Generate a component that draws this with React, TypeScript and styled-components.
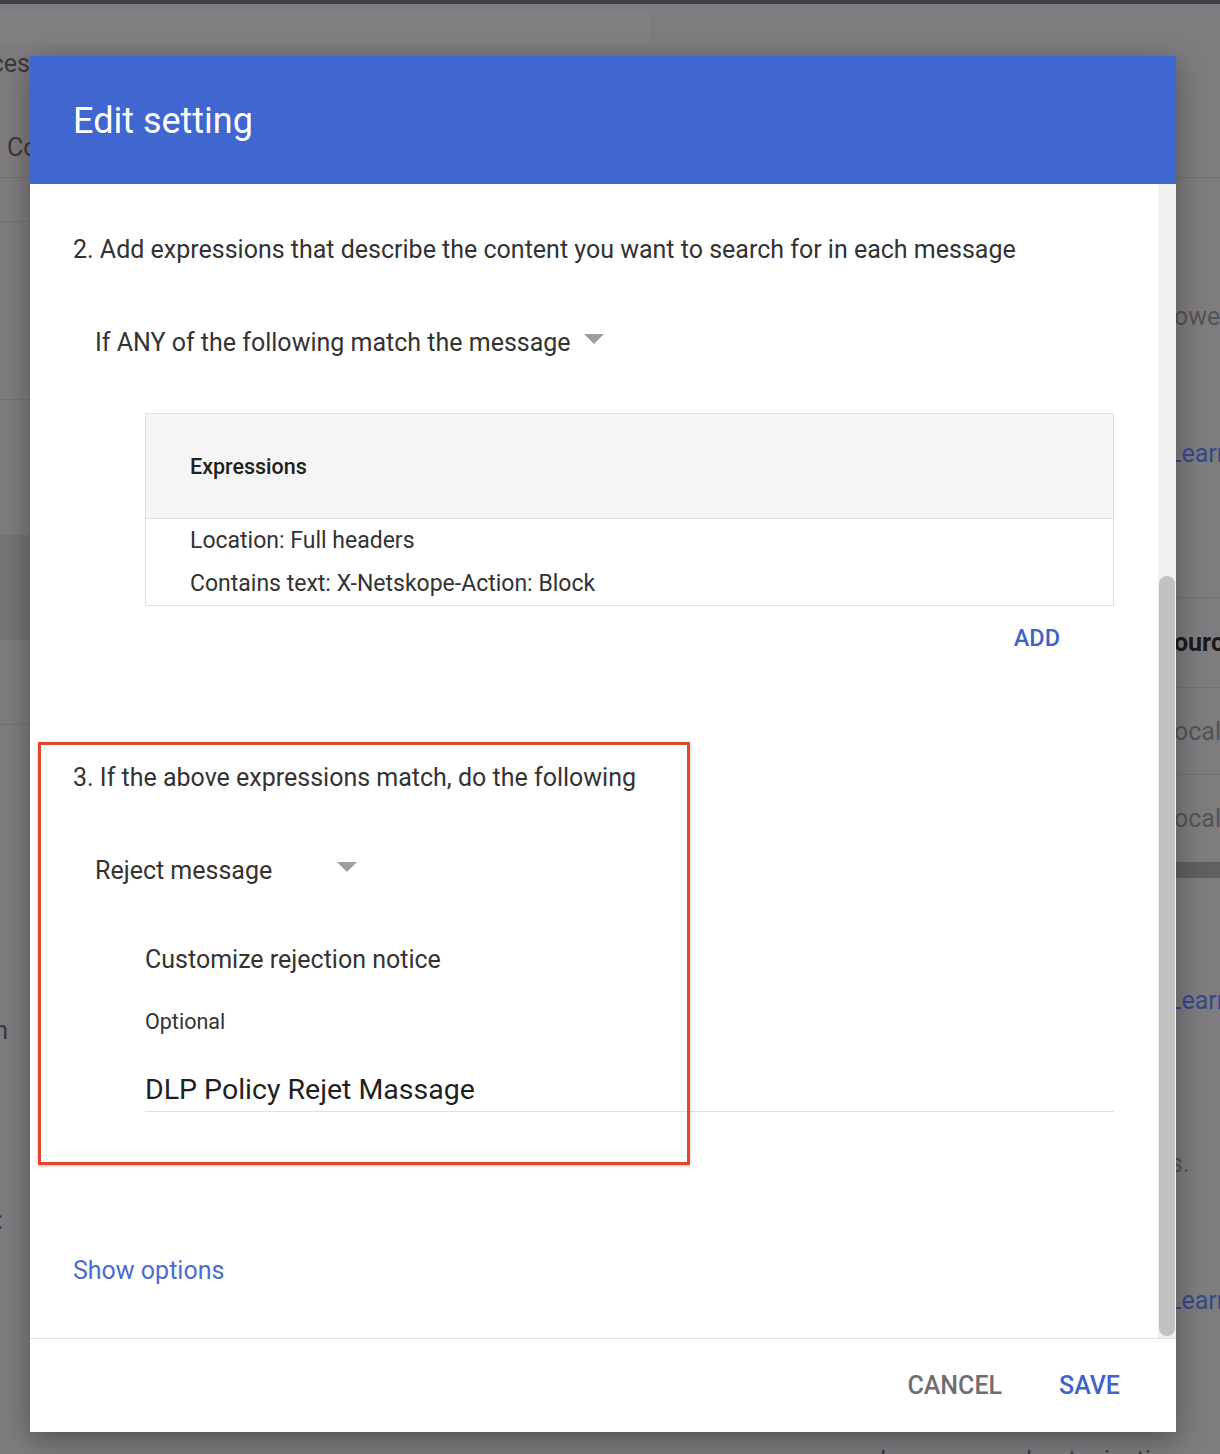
import styled, { createGlobalStyle } from "styled-components";

const GlobalStyle = createGlobalStyle`
  html, body {
    margin: 0;
    padding: 0;
  }
  body {
    font-family: Roboto, "Noto Sans", "Liberation Sans", sans-serif;
  }
`;

const Page = styled.div`
  position: relative;
  width: 1220px;
  height: 1454px;
  overflow: hidden;
  background: #7e7c7f;
`;

const TopBar = styled.div`
  height: 4px;
  background: #413f43;
`;

const SearchBand = styled.div`
  height: 46px;
  display: flex;
  padding: 6px 0;
  box-sizing: border-box;
`;

const SearchBox = styled.div`
  width: 650px;
  background: #817f82;
`;

const Backdrop = styled.div`
  display: grid;
  grid-template-columns: 30px 1fr 44px;
`;

const Strip = styled.div`
  display: flex;
  flex-direction: column;
  overflow: hidden;
`;

const BgRow = styled.div<{ $h: number; $line?: boolean; $shade?: string; $end?: boolean; $inset?: number }>`
  flex: none;
  height: ${(p) => p.$h}px;
  box-sizing: border-box;
  display: flex;
  align-items: center;
  justify-content: ${(p) => (p.$end ? "flex-end" : "flex-start")};
  padding: ${(p) => (p.$end ? `0 ${p.$inset ?? 0}px 0 0` : `0 0 0 ${p.$inset ?? 0}px`)};
  border-bottom: ${(p) => (p.$line ? "1px solid #737174" : "none")};
  background: ${(p) => p.$shade ?? "transparent"};
  white-space: nowrap;
  overflow: hidden;
`;

const toneColors = {
  text: "#3b393c",
  muted: "#555356",
  link: "#35498a",
  strong: "#1b1a1c",
};

const BgText = styled.span<{ $tone?: keyof typeof toneColors; $shift?: number }>`
  font-size: 25px;
  font-weight: ${(p) => (p.$tone === "strong" ? 700 : 400)};
  color: ${(p) => toneColors[p.$tone ?? "text"]};
  margin-left: ${(p) => p.$shift ?? 0}px;
`;

const Dialog = styled.div`
  position: absolute;
  left: 30px;
  top: 56px;
  width: 1146px;
  height: 1376px;
  display: flex;
  flex-direction: column;
  background: #ffffff;
  box-shadow: 0 8px 28px rgba(0, 0, 0, 0.35);
  overflow: hidden;
`;

const Header = styled.header`
  flex: none;
  height: 128px;
  background: #4066d0;
  display: flex;
  align-items: center;
  padding-left: 43px;
`;

const Title = styled.h1`
  margin: 2px 0 0;
  font-size: 36px;
  font-weight: 400;
  color: #ffffff;
`;

const Body = styled.div`
  flex: 1;
  min-height: 0;
  display: flex;
`;

const Content = styled.div`
  flex: 1;
  display: flex;
  flex-direction: column;
  padding: 0 44px 0 43px;
`;

const ScrollTrack = styled.div`
  flex: none;
  width: 18px;
  padding: 0 1px 2px;
  box-sizing: border-box;
  background: #f1f1f1;
  display: flex;
  flex-direction: column;
  justify-content: flex-end;
`;

const ScrollThumb = styled.div`
  height: 760px;
  border-radius: 8px;
  background: #c1c1c1;
`;

const StepTitle = styled.p<{ $top: number }>`
  margin: ${(p) => p.$top}px 0 0;
  font-size: 25px;
  line-height: 32px;
  color: #333333;
`;

const Select = styled.div<{ $top: number }>`
  display: flex;
  align-items: center;
  margin: ${(p) => p.$top}px 0 0 22px;
`;

const SelectLabel = styled.span<{ $minWidth?: number }>`
  min-width: ${(p) => p.$minWidth ?? 0}px;
  font-size: 25px;
  line-height: 32px;
  color: #333333;
`;

const Caret = styled.span`
  width: 0;
  height: 0;
  margin: -8px 0 0 13px;
  border-left: 10px solid transparent;
  border-right: 10px solid transparent;
  border-top: 10px solid #9e9e9e;
`;

const ExprTable = styled.div`
  margin: 54px 0 0 72px;
  border: 1px solid #e0e0e0;
`;

const ExprHead = styled.div`
  height: 104px;
  display: flex;
  align-items: center;
  padding-left: 44px;
  background: #f5f5f5;
  border-bottom: 1px solid #e0e0e0;
  font-size: 21.5px;
  font-weight: 500;
  color: #212121;
`;

const ExprRow = styled.div`
  height: 43px;
  line-height: 43px;
  padding-left: 44px;
  font-size: 23px;
  color: #333333;
`;

const AddRow = styled.div`
  display: flex;
  justify-content: flex-end;
  margin-top: 16px;
  padding-right: 54px;
`;

const FlatButton = styled.button<{ $tone?: "primary" | "plain"; $size?: number }>`
  border: 0;
  padding: 0;
  background: none;
  font-family: inherit;
  font-size: ${(p) => p.$size ?? 23.5}px;
  line-height: 32px;
  font-weight: 500;
  text-transform: uppercase;
  color: ${(p) => (p.$tone === "plain" ? "#6e6e6e" : "#3f63cc")};
  cursor: pointer;
`;

const SubLabel = styled.p<{ $top: number; $small?: boolean }>`
  margin: ${(p) => p.$top}px 0 0 72px;
  font-size: ${(p) => (p.$small ? 21.5 : 25)}px;
  line-height: ${(p) => (p.$small ? 28 : 32)}px;
  color: #333333;
`;

const Field = styled.input`
  margin: 36px 0 0 72px;
  padding: 0 0 4px;
  height: 40px;
  box-sizing: border-box;
  border: 0;
  border-bottom: 1px solid #e0e0e0;
  outline: none;
  background: none;
  font-family: inherit;
  font-size: 28.5px;
  line-height: 36px;
  color: #1f1f1f;
`;

const ShowOptions = styled.a`
  align-self: flex-start;
  margin-top: 143px;
  font-size: 25px;
  line-height: 32px;
  color: #4a6bd0;
  text-decoration: none;
  cursor: pointer;
`;

const Footer = styled.footer`
  flex: none;
  height: 94px;
  box-sizing: border-box;
  border-top: 1px solid #e0e0e0;
  display: flex;
  align-items: center;
  justify-content: flex-end;
  gap: 57px;
  padding-right: 56px;
`;

const Highlight = styled.div`
  position: absolute;
  left: 38px;
  top: 742px;
  width: 652px;
  height: 423px;
  box-sizing: border-box;
  border: 3px solid #e2452f;
  box-shadow: 0 1px 3px rgba(0, 0, 0, 0.25);
  pointer-events: none;
`;

export default function App() {
  return (
    <Page>
      <GlobalStyle />
      <TopBar />
      <SearchBand>
        <SearchBox />
      </SearchBand>
      <Backdrop>
        <Strip>
          <BgRow $h={26} $end>
            <BgText>Services</BgText>
          </BgRow>
          <BgRow $h={42} />
          <BgRow $h={60} $line $inset={7}>
            <BgText>Content</BgText>
          </BgRow>
          <BgRow $h={44} $line />
          <BgRow $h={178} $line />
          <BgRow $h={135} />
          <BgRow $h={105} $line $shade="#767477" />
          <BgRow $h={85} $line />
          <BgRow $h={285} />
          <BgRow $h={40} $end $inset={22}>
            <BgText>Attach</BgText>
          </BgRow>
          <BgRow $h={150} />
          <BgRow $h={40} $end $inset={27}>
            <BgText>Name:</BgText>
          </BgRow>
        </Strip>
        <Strip>
          <BgRow $h={1390} />
          <BgRow $h={40} $inset={850}>
            <BgText>Learn more about rejection notices and options</BgText>
          </BgRow>
        </Strip>
        <Strip>
          <BgRow $h={128} $line />
          <BgRow $h={118} />
          <BgRow $h={40}>
            <BgText $tone="muted" $shift={-2}>owed</BgText>
          </BgRow>
          <BgRow $h={97} />
          <BgRow $h={40}>
            <BgText $tone="link" $shift={-8}>Learn</BgText>
          </BgRow>
          <BgRow $h={125} $line />
          <BgRow $h={90} $line>
            <BgText $tone="strong" $shift={-2}>ource</BgText>
          </BgRow>
          <BgRow $h={87} $line>
            <BgText $tone="muted" $shift={-2}>ocal</BgText>
          </BgRow>
          <BgRow $h={87}>
            <BgText $tone="muted" $shift={-2}>ocal</BgText>
          </BgRow>
          <BgRow $h={16} $shade="#625f63" />
          <BgRow $h={102} />
          <BgRow $h={40}>
            <BgText $tone="link" $shift={-8}>Learn</BgText>
          </BgRow>
          <BgRow $h={123} />
          <BgRow $h={40}>
            <BgText $tone="muted" $shift={-6}>s.</BgText>
          </BgRow>
          <BgRow $h={97} />
          <BgRow $h={40}>
            <BgText $tone="link" $shift={-8}>Learn</BgText>
          </BgRow>
        </Strip>
      </Backdrop>

      <Dialog>
        <Header>
          <Title>Edit setting</Title>
        </Header>
        <Body>
          <Content>
            <StepTitle $top={50}>
              2. Add expressions that describe the content you want to search for in each message
            </StepTitle>
            <Select $top={61}>
              <SelectLabel>If ANY of the following match the message</SelectLabel>
              <Caret />
            </Select>
            <ExprTable>
              <ExprHead>Expressions</ExprHead>
              <ExprRow>Location: Full headers</ExprRow>
              <ExprRow>Contains text: X-Netskope-Action: Block</ExprRow>
            </ExprTable>
            <AddRow>
              <FlatButton>Add</FlatButton>
            </AddRow>

            <StepTitle $top={108}>3. If the above expressions match, do the following</StepTitle>
            <Select $top={61}>
              <SelectLabel $minWidth={229}>Reject message</SelectLabel>
              <Caret />
            </Select>
            <SubLabel $top={57}>Customize rejection notice</SubLabel>
            <SubLabel $top={32} $small>
              Optional
            </SubLabel>
            <Field readOnly value="DLP Policy Rejet Massage" />

            <ShowOptions>Show options</ShowOptions>
          </Content>
          <ScrollTrack>
            <ScrollThumb />
          </ScrollTrack>
        </Body>
        <Footer>
          <FlatButton $tone="plain" $size={25}>
            Cancel
          </FlatButton>
          <FlatButton $size={25}>Save</FlatButton>
        </Footer>
      </Dialog>

      <Highlight />
    </Page>
  );
}
